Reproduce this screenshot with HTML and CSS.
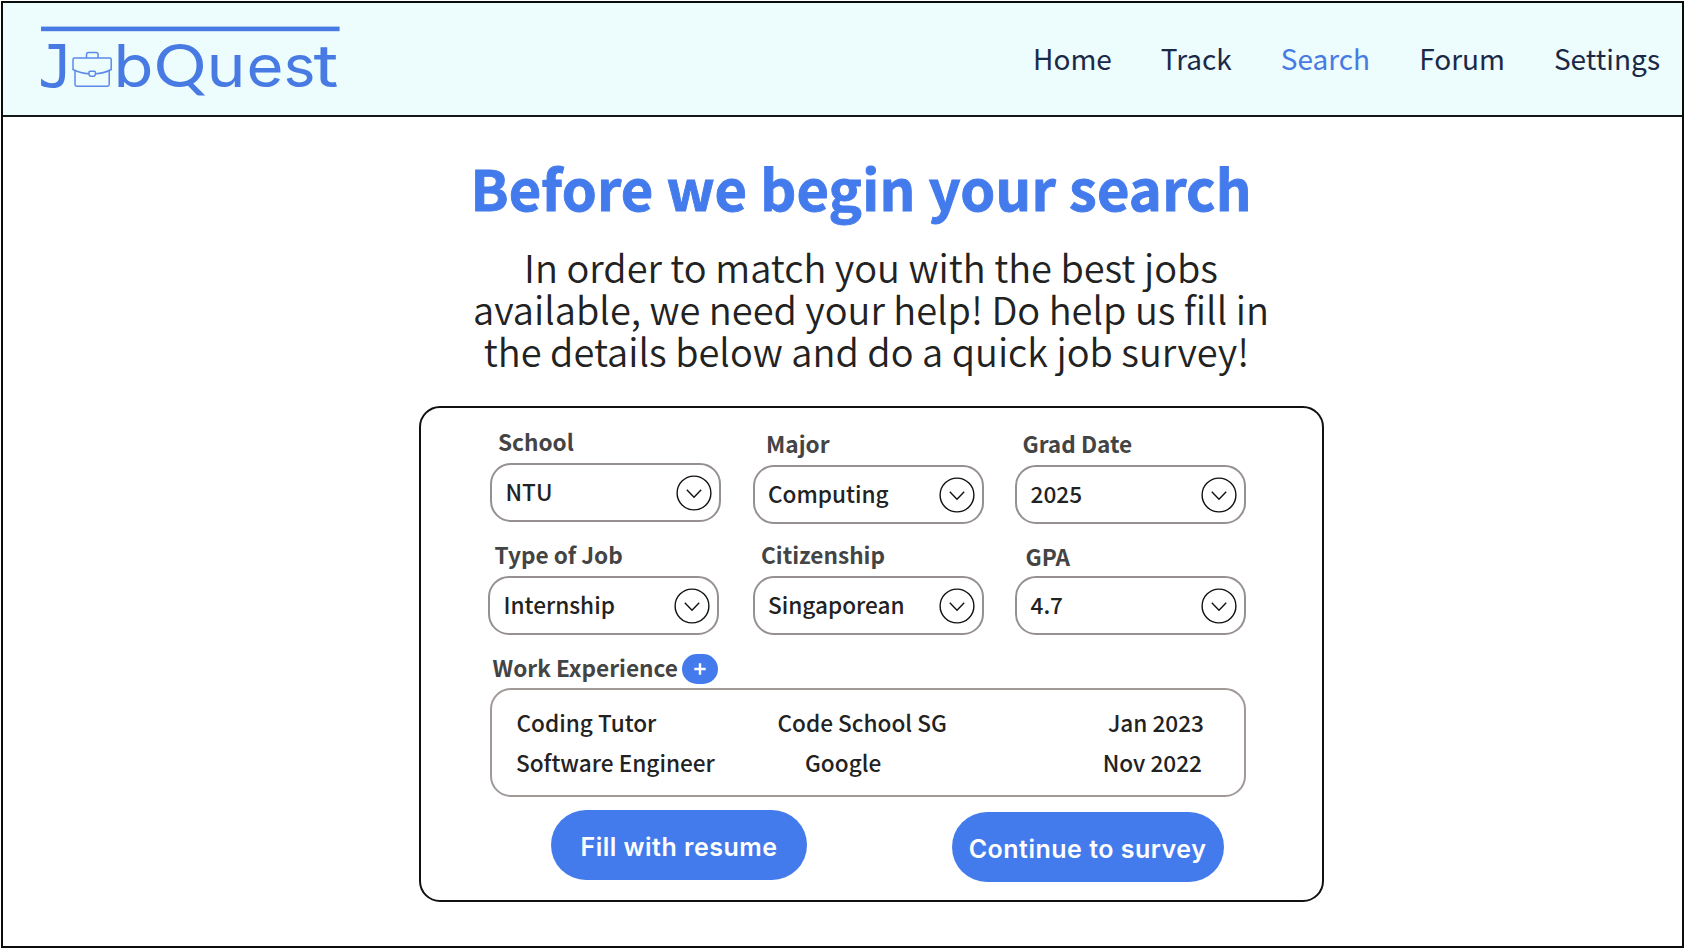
FILE: index.html
```html
<!DOCTYPE html>
<html lang="en">
<head>
<meta charset="utf-8">
<title>JobQuest</title>
<link rel="stylesheet" href="styles.css">
</head>
<body>
<svg class="defs" width="0" height="0" aria-hidden="true">
  <symbol id="chev" viewBox="0 0 36 36">
    <circle cx="18" cy="18" r="16.9"/>
    <path d="M10.8 14.800 18 22.200 25.2 14.800"/>
  </symbol>
</svg>
<div class="frame">
  <header class="header">
    <svg class="logo" width="310" height="80" viewBox="36 20 310 80" role="img" aria-label="JobQuest">
      <rect x="41" y="26.6" width="298.6" height="4.6"/>
      <text class="logo-j" x="38" y="86.5" textLength="35" lengthAdjust="spacingAndGlyphs">J</text>
      <g class="case">
        <path d="M86.5 58v-3.500q0-2 2-2h7.600q2 0 2 2V58"/>
        <path d="M74.500 58h35.200q1.500 0 1.500 1.500v10q-8 4.200-15.800 4.200M88.900 73.700q-8-.2-15.900-4.200v-10q0-1.500 1.500-1.500"/>
        <path d="M75 70.800V84.500q0 1.700 1.700 1.700h30.800q1.700 0 1.700-1.700V70.800"/>
        <path d="M90 71.300h4.400q1 0 1 1v2.400l-1.200 1.500h-4l-1.200-1.500v-2.400q0-1 1-1z"/>
      </g>
      <text x="113.500" y="86.500" textLength="40" lengthAdjust="spacingAndGlyphs">b</text>
      <text class="logo-q" x="154" y="86.500" textLength="52" lengthAdjust="spacingAndGlyphs">Q</text>
      <text x="206.500" y="86.500" textLength="39" lengthAdjust="spacingAndGlyphs">u</text>
      <text x="246.500" y="86.500" textLength="37" lengthAdjust="spacingAndGlyphs">e</text>
      <text x="283.500" y="86.500" textLength="32" lengthAdjust="spacingAndGlyphs">s</text>
      <text x="313.500" y="86.500" textLength="25" lengthAdjust="spacingAndGlyphs">t</text>
    </svg>
    <nav class="nav">
      <a>Home</a><a>Track</a><a class="active">Search</a><a>Forum</a><a>Settings</a>
    </nav>
  </header>
  <main class="main">
    <h1>Before we begin your search</h1>
    <p class="intro">In order to match you with the best jobs<br>available, we need your help! Do help us fill in<br><span class="last">the details below and do a quick job survey!</span></p>
    <section class="card">
      <div class="fields">
        <div class="field school"><label>School</label><div class="select"><span>NTU</span><svg><use href="#chev"/></svg></div></div>
        <div class="field major"><label>Major</label><div class="select"><span>Computing</span><svg><use href="#chev"/></svg></div></div>
        <div class="field grad"><label>Grad Date</label><div class="select"><span>2025</span><svg><use href="#chev"/></svg></div></div>
        <div class="field job"><label>Type of Job</label><div class="select"><span>Internship</span><svg><use href="#chev"/></svg></div></div>
        <div class="field citizen"><label>Citizenship</label><div class="select"><span>Singaporean</span><svg><use href="#chev"/></svg></div></div>
        <div class="field gpa"><label>GPA</label><div class="select"><span>4.7</span><svg><use href="#chev"/></svg></div></div>
      </div>
      <div class="work-head"><label>Work Experience</label><button class="add" aria-label="Add"><svg width="12" height="12" viewBox="0 0 12 12"><path d="M6 .3v11.400M.3 6h11.400"/></svg></button></div>
      <div class="work">
        <div class="row"><span class="role">Coding Tutor</span><span class="org">Code School SG</span><span class="date">Jan 2023</span></div>
        <div class="row second"><span class="role">Software Engineer</span><span class="org">Google</span><span class="date">Nov 2022</span></div>
      </div>
      <div class="actions">
        <button class="btn fill">Fill with resume</button>
        <button class="btn continue">Continue to survey</button>
      </div>
    </section>
  </main>
</div>
</body>
</html>
```
FILE: styles.css
```css
* { box-sizing: border-box; }
body {
  margin: 0;
  padding: 1px 1px 2px;
  height: 950px;
  background: #fff;
  font-family: "Noto Sans CJK SC", "Noto Sans", sans-serif;
  color: #222;
  overflow: hidden;
}
.defs { position: absolute; }
.frame { height: 947px; border: 2px solid #0b0d0d; }
.header {
  display: flex;
  justify-content: space-between;
  height: 114px;
  background: #edfcfc;
  border-bottom: 2px solid #141818;
}
.logo { margin: 17px 0 0 33px; fill: #477be3; }
.logo text { font: 400 59px Inter, sans-serif; }
.logo .logo-q { font: 400 60px Lato, sans-serif; }
.logo .logo-j { font: 400 58px "DejaVu Sans Mono", monospace; }
.case { fill: none; stroke: #5c8ae8; stroke-width: 1.5; }
.nav {
  display: flex;
  gap: 49px;
  margin: 35px 22px 0 0;
  font-size: 28px;
  line-height: 41px;
  color: #1b2948;
}
.nav .active { color: #477be3; }
.main { display: flex; flex-direction: column; }
h1 {
  margin: 37px 0 0 467.500px;
  font-size: 56px;
  line-height: 66px;
  font-weight: 700;
  letter-spacing: .2px;
  color: #447bec;
  -webkit-text-stroke: .9px #447bec;
  white-space: nowrap;
}
.intro {
  width: 860px;
  margin: 26px 0 0 438px;
  font-size: 38px;
  line-height: 42px;
  font-weight: 350;
  text-align: center;
  white-space: nowrap;
}
.last { padding-right: 9px; }
.card {
  width: 905px;
  height: 496px;
  margin: 34px 0 0 416px;
  padding: 20px 0 0 69px;
  border: 2px solid #111;
  border-radius: 21px;
}
.fields {
  display: grid;
  grid-template-columns: repeat(3, 231px);
  column-gap: 31.500px;
  grid-template-rows: 113px 95px;
}
label {
  display: block;
  font-size: 22.600px;
  line-height: 28px;
  font-weight: 700;
  color: #444;
  white-space: nowrap;
}
.field label { margin-bottom: 7px; }
.school label { margin-left: 8px; }
.major, .grad { padding-top: 2px; }
.major label { margin-left: 13.500px; }
.grad label { margin-left: 7.500px; }
.job { margin-left: -2px; margin-right: 2px; }
.job label { margin-left: 6.500px; }
.citizen label { margin-left: 8.500px; }
.gpa { padding-top: 2px; }
.gpa label { margin-left: 10.500px; margin-bottom: 5px; }
.select {
  display: flex;
  justify-content: space-between;
  align-items: center;
  height: 59px;
  padding: 0 7px 0 13.500px;
  border: 2px solid #979090;
  border-radius: 21px;
  font-size: 22.600px;
  line-height: 28px;
  font-weight: 500;
}
.select span { margin-bottom: 1px; }
.select svg { width: 36px; height: 36px; fill: none; stroke: #111; stroke-width: 1.400; }
.work-head { display: flex; height: 30px; margin: 18px 0 0 2.500px; }
.add {
  width: 36px;
  height: 30px;
  margin-left: 4px;
  padding: 0;
  border: 0;
  border-radius: 15px;
  background: #447bec;
  display: flex;
  align-items: center;
  justify-content: center;
}
.add svg { stroke: #fff; stroke-width: 2.400; }
.work {
  width: 756px;
  height: 109px;
  margin-top: 4px;
  padding: 19px 40px 0 24.500px;
  border: 2px solid #a09998;
  border-radius: 21px;
  font-size: 22.600px;
  line-height: 28px;
  font-weight: 500;
}
.row { display: grid; grid-template-columns: 261px 1fr auto; white-space: nowrap; }
.second { margin-top: 12px; }
.second .org { padding-left: 27.500px; }
.second .date { padding-right: 2px; }
.second .role { margin-left: -.5px; }
.actions { display: flex; gap: 144.500px; align-items: flex-start; margin: 12.500px 0 0 61px; }
.btn {
  height: 70px;
  padding: 5px 0 0;
  border: 0;
  border-radius: 35px;
  background: #447bec;
  color: #fff;
  font: 600 25px Inter, sans-serif;
  letter-spacing: .5px;
  white-space: nowrap;
}
.fill { width: 256px; }
.continue { width: 272px; margin-top: 2px; }
```
